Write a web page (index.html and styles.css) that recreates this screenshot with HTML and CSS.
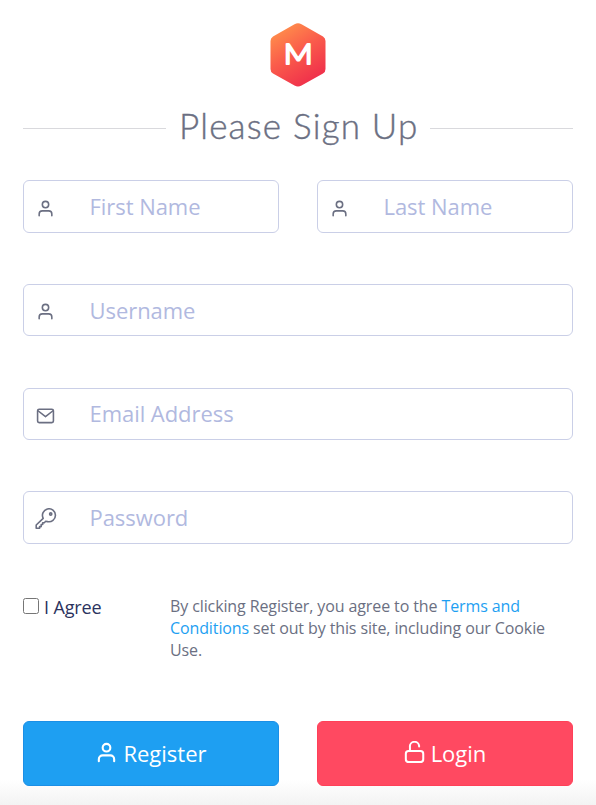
FILE: index.html
```html
<!DOCTYPE html>
<html lang="en">
<head>
<meta charset="utf-8">
<title>Sign Up</title>
<link rel="stylesheet" href="styles.css">
</head>
<body>
<svg class="sprite" aria-hidden="true">
  <symbol id="user" viewBox="0 0 24 24"><circle cx="12" cy="7" r="4"/><path d="M20 21v-2a4 4 0 0 0-4-4H8a4 4 0 0 0-4 4v2"/></symbol>
</svg>
<form class="signup">
  <svg class="logo" viewBox="0 0 56 64" role="img" aria-label="M">
    <defs><linearGradient id="flame" x1="0.15" y1="0.05" x2="0.65" y2="0.95"><stop offset="0" stop-color="#ff914b"/><stop offset="0.5" stop-color="#fa5b4b"/><stop offset="1" stop-color="#f0324b"/></linearGradient></defs>
    <path fill="url(#flame)" d="M24.500 1.200Q28-.8 31.500 1.200L53 13.500Q55.500 15 55.500 18V46Q55.500 49 53 50.500L31.500 62.500Q28 64.500 24.500 62.500L3 50.500Q.5 49 .5 46V18Q.5 15 3 13.500Z"/>
    <text class="logo-letter" x="28.300" y="41" text-anchor="middle" textLength="29" lengthAdjust="spacingAndGlyphs">M</text>
  </svg>
  <h1 class="title"><span>Please Sign Up</span></h1>
  <div class="row names">
    <label class="field"><svg class="icon"><use href="#user"/></svg><input type="text" placeholder="First Name"></label>
    <label class="field"><svg class="icon"><use href="#user"/></svg><input type="text" placeholder="Last Name"></label>
  </div>
  <label class="field short username"><svg class="icon"><use href="#user"/></svg><input type="text" placeholder="Username"></label>
  <label class="field short email"><svg class="icon mail" viewBox="0 0 24 24"><rect x="2" y="4" width="20" height="17" rx="2"/><path d="M2.500 6L12 13.500 21.500 6"/></svg><input type="email" placeholder="Email Address"></label>
  <label class="field password"><svg class="icon key" viewBox="0 0 22 22"><path d="M8.200 10.300A6.500 6.500 0 1 1 12.400 13.600L10.700 13.300 9.300 14.700H7.700V16.500H6.200V18.600H4.600V20.300H1.200V17Z"/><circle cx="15.700" cy="6" r="1.100"/></svg><input type="password" placeholder="Password"></label>
  <div class="terms">
    <label class="agree"><input type="checkbox">I Agree</label>
    <p>By clicking Register, you agree to the <a href="#">Terms and Conditions</a> set out by this site, including our Cookie Use.</p>
  </div>
  <div class="row">
    <button class="btn register" type="button"><svg class="icon"><use href="#user"/></svg><span>Register</span></button>
    <button class="btn login" type="button"><svg class="icon" viewBox="0 0 24 24"><rect x="2" y="11" width="19" height="12" rx="3"/><path d="M6.500 11V6.500a5 5 0 0 1 10-1.200V6"/></svg><span>Login</span></button>
  </div>
</form>
</body>
</html>
```
FILE: styles.css
```css
* { box-sizing: border-box; }
html { height: 100%; }
body {
  margin: 0;
  height: 805px;
  overflow: hidden;
  font-family: "Open Sans", sans-serif;
  color: #6b6f82;
  background: linear-gradient(#fff 775px, #fff 780px, #f3f3f3 805px);
}
.sprite { position: absolute; width: 0; height: 0; }
.signup { display: flex; flex-direction: column; padding: 23px 23px 0; }
.logo { width: 56px; height: 64px; align-self: center; }
.logo-letter {
  font: 300 27px Lato, sans-serif;
  fill: #fff;
  stroke: #fff;
  stroke-width: 2.2;
  stroke-linejoin: round;
}
.title {
  display: flex;
  align-items: center;
  gap: 13px;
  height: 52px;
  margin: 15px 0 26px;
  font: 300 35px/52px Lato, sans-serif;
  letter-spacing: 1.2px;
  white-space: nowrap;
  -webkit-text-stroke: 0.4px currentColor;
}
.title::before, .title::after { content: ""; flex: 1; height: 1px; background: #d9d9dd; }
.title span { width: 238px; padding-bottom: 6px; }
.row { display: grid; grid-template-columns: 1fr 1fr; gap: 38px; }
.field {
  display: flex;
  align-items: center;
  height: 53px;
  border: 1px solid #cacfe7;
  border-radius: 6px;
  overflow: hidden;
}
.short { height: 52px; }
.username { margin-top: 51px; }
.email { margin-top: 52px; }
.password { margin-top: 51px; }
.icon {
  flex: none;
  width: 19px;
  height: 19px;
  fill: none;
  stroke: currentColor;
  stroke-width: 2;
  stroke-linecap: round;
  stroke-linejoin: round;
}
.field .icon { margin: 3px 34.5px 0 12px; }
.field .key { width: 22px; height: 22px; margin: 2px 32.5px 0 11px; stroke-width: 1.6; }
.field input {
  flex: 1;
  min-width: 0;
  height: 100%;
  padding: 0 0 2px;
  border: 0;
  outline: 0;
  background: transparent;
  font: 400 22px "Open Sans", sans-serif;
  letter-spacing: -0.05px;
  color: #3b4781;
}
.username input { padding-bottom: 0; }
.field input::placeholder { color: #b1b9df; opacity: 1; }
.terms {
  display: grid;
  grid-template-columns: 147px 1fr;
  height: 126px;
  margin-top: 51px;
}
.agree {
  display: flex;
  align-items: center;
  height: 24px;
  color: #2b335e;
  font-size: 18px;
  letter-spacing: -0.15px;
}
.agree input { width: 16px; height: 16px; margin: 0 5px 2px 0; }
.terms p { margin: 0; font-size: 16px; line-height: 22px; letter-spacing: -0.11px; }
.terms a { color: #1e9ff2; text-decoration: none; }
.btn {
  display: flex;
  align-items: center;
  justify-content: center;
  gap: 5px;
  height: 65px;
  padding: 0 0 2px;
  border: 1px solid;
  border-radius: 6px;
  font: 400 22px "Open Sans", sans-serif;
  color: #fff;
}
.btn .icon { width: 22px; height: 22px; margin-bottom: 1px; stroke-width: 2.2; }
.btn.register .icon { width: 23px; height: 23px; margin-bottom: 0; }
.register { background: #1e9ff2; border-color: #1b8fe6; }
.login { background: #ff4961; border-color: #ff4058; }
```
